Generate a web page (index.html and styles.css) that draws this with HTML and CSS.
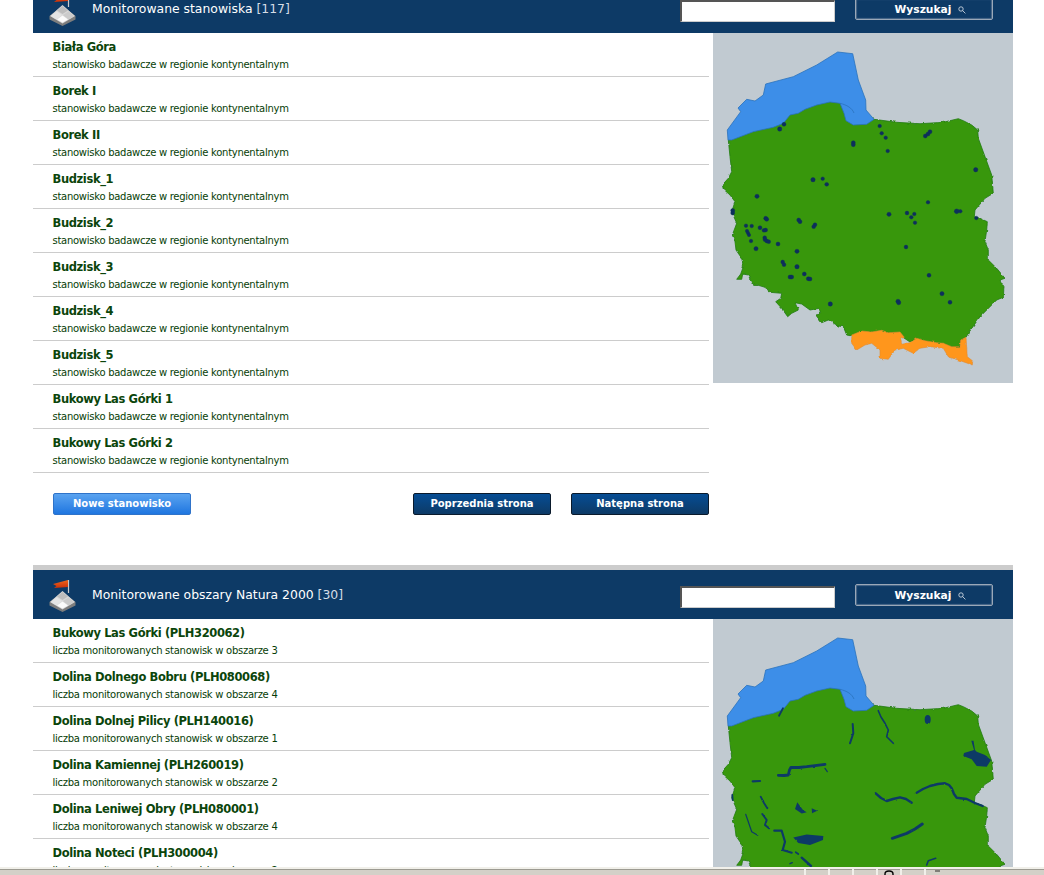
FILE: index.html
```html
<!DOCTYPE html>
<html lang="pl">
<head>
<meta charset="utf-8">
<title>Monitorowane stanowiska</title>
<link rel="stylesheet" href="styles.css">
</head>
<body>
<svg class="defs" width="0" height="0" aria-hidden="true">
  <defs>
    <filter id="rough" x="-5%" y="-5%" width="110%" height="110%" color-interpolation-filters="sRGB">
      <feTurbulence type="fractalNoise" baseFrequency="0.22" numOctaves="2" seed="4"/>
      <feDisplacementMap in="SourceGraphic" scale="2.6" xChannelSelector="R" yChannelSelector="G"/>
    </filter>
    <filter id="rough-soft" x="-5%" y="-5%" width="110%" height="110%" color-interpolation-filters="sRGB">
      <feTurbulence type="fractalNoise" baseFrequency="0.3" numOctaves="2" seed="9"/>
      <feDisplacementMap in="SourceGraphic" scale="1.8" xChannelSelector="R" yChannelSelector="G"/>
    </filter>
    <linearGradient id="flag-fill" x1="0" y1="0" x2="0" y2="1">
      <stop offset="0" stop-color="#f0661c"/>
      <stop offset="1" stop-color="#c9300a"/>
    </linearGradient>
    <symbol id="poland" viewBox="0 0 300 350">
      <rect width="300" height="350" fill="#c1cad1"/>
      <path class="land" d="M15.3 107L17 123.7 18.7 138.7 15.3 145.3 9.3 152 10.3 156 17 162 22 168.7 18.7 178.7 23.7 190.3 19.3 202 22 208.7 23 217 28.7 225.3 30.3 233.7 27.7 241 23.7 246.3 28.7 246.3 29.7 241 35.3 242 38.7 250.3 52 254.3 57 259.3 68.7 260.3 67.7 265.3 62.7 268.7 68.7 275.3 74.7 283.7 78.7 280.3 85.3 277 82 269.7 88.7 271 97 277 106.3 275.3 107.7 281 102.7 282 108.7 289.7 115.3 287 125.3 293 130.3 293.7 133.7 302 138.7 303 148.7 299 158.7 300 168.7 299 175.3 300 187 300 191 305 197 309 203.7 306 212 308 223.7 310 230.3 311 238.7 314 247 314 247.7 307 253 304.3 255.3 300.3 267 283.7 283.7 267 290.3 264.3 291 253.7 287 247 292 245.3 283.7 235.3 275.3 227 275.3 217 272 208.7 273.7 197 274.3 188.7 267 185.3 261.3 183.7 262 177 272 165.3 280.3 160.3 278.7 142 265.3 105.3 264.7 97 258.7 92 250.3 87.7 245.3 85.7 230.3 89.3 207 90.7 183.7 89.3 161 86.3 120 60 60 80Z"/>
      <path class="sea" d="M14.3 97L27.7 78.7 25 75 33.7 66.3 42 68 50.3 62 52.7 51 80.3 43.7 103.7 32 124.7 19 139.7 20.7 145.3 47 152.7 67 153 77 161 86.3 153.7 91.3 140.3 92 133 87.7 131 80.3 127 70.3 117 69 103.7 72 92 76.3 85.3 80.3 77 82 70.3 90.3 60.3 94.3 40.3 98.7 18.7 107 15 107Z"/>
      <path class="bay" d="M127 70.3C134 72 139 75 141 80"/>
      <path class="hills" d="M138.7 302L148.7 298 158.7 299 168.7 297.3 175.3 299.7 187 299 191.3 304.3 188 307 188.7 311.3 197 309.7 203.7 305.3 212 307.7 223.7 309.7 230.3 310.3 238.7 313.7 247 313.7 247.7 307 253 304.3 254.3 323.7 259.7 328 259.3 332 245.3 327 235.3 323.7 230.3 315.3 217 313.7 207 315.3 200.3 320.3 190.3 315.3 182 317 175.3 326.3 167 325.3 167 317 158.7 310.3 152 312 143.7 317 138.7 310.3Z"/>
    </symbol>
    <symbol id="flagstone" viewBox="0 0 27 32">
      <path d="M13.5 12L26.5 22V25.5L13.5 32 0.5 25.5V22Z" fill="#7d7d7d"/>
      <path d="M13.5 11L26 22 13.5 29.5 1 22Z" fill="#d8d8d8"/>
      <path d="M13.5 12L19 16.5 13.5 20 8 16.5Z" fill="#bdbdbd"/>
      <path d="M7.5 17.5L13 21 7.5 25.5 2 22Z" fill="#e4e4e4"/>
      <path d="M19.5 17.5L25 22 19.5 25.5 14 21Z" fill="#cbcbcb"/>
      <path d="M13.5 21.5L19 25.5 13.5 28.5 8 25.5Z" fill="#fbfbfb"/>
      <path d="M19.5 0V13" stroke="#c9c9c9" stroke-width="1.2"/>
      <path d="M19 0L4 4 7.5 6 5 8 19 7Z" fill="url(#flag-fill)"/>
    </symbol>
  </defs>
</svg>

<main class="page">
  <section class="panel">
    <header class="bar">
      <svg class="bar-icon"><use href="#flagstone"/></svg>
      <h2 class="bar-title">Monitorowane stanowiska <span class="count">[117]</span></h2>
      <input class="search-input" type="text" aria-label="Szukaj">
      <button class="search-button" type="button">Wyszukaj<svg class="lens" viewBox="0 0 8 8"><circle cx="3" cy="3" r="2.2"/><path d="M4.6 4.6L7.4 7.4"/></svg></button>
    </header>
    <div class="content">
      <div class="listing">
        <ul class="rows">
          <li class="row"><a class="row-title">Biała Góra</a><p class="row-note">stanowisko badawcze w regionie kontynentalnym</p></li>
          <li class="row"><a class="row-title">Borek I</a><p class="row-note">stanowisko badawcze w regionie kontynentalnym</p></li>
          <li class="row"><a class="row-title">Borek II</a><p class="row-note">stanowisko badawcze w regionie kontynentalnym</p></li>
          <li class="row"><a class="row-title">Budzisk_1</a><p class="row-note">stanowisko badawcze w regionie kontynentalnym</p></li>
          <li class="row"><a class="row-title">Budzisk_2</a><p class="row-note">stanowisko badawcze w regionie kontynentalnym</p></li>
          <li class="row"><a class="row-title">Budzisk_3</a><p class="row-note">stanowisko badawcze w regionie kontynentalnym</p></li>
          <li class="row"><a class="row-title">Budzisk_4</a><p class="row-note">stanowisko badawcze w regionie kontynentalnym</p></li>
          <li class="row"><a class="row-title">Budzisk_5</a><p class="row-note">stanowisko badawcze w regionie kontynentalnym</p></li>
          <li class="row"><a class="row-title">Bukowy Las Górki 1</a><p class="row-note">stanowisko badawcze w regionie kontynentalnym</p></li>
          <li class="row"><a class="row-title">Bukowy Las Górki 2</a><p class="row-note">stanowisko badawcze w regionie kontynentalnym</p></li>
        </ul>
        <div class="actions">
          <button class="btn btn-new" type="button">Nowe stanowisko</button>
          <div class="pager">
            <button class="btn btn-page" type="button">Poprzednia strona</button>
            <button class="btn btn-page" type="button">Natępna strona</button>
          </div>
        </div>
      </div>
      <svg class="map" viewBox="0 0 300 350">
        <use href="#poland"/>
        <g class="dots">
          <circle cx="71" cy="91.3" r="2"/><circle cx="66.7" cy="96" r="2.2"/><circle cx="140.3" cy="109.7" r="2"/><circle cx="140.3" cy="111.7" r="2"/>
          <circle cx="166.7" cy="93" r="1.8"/><circle cx="168.7" cy="100.3" r="1.8"/><circle cx="172.7" cy="104.7" r="1.8"/><circle cx="174.7" cy="118" r="1.8"/>
          <circle cx="217" cy="98.7" r="2"/><circle cx="215" cy="101" r="2"/><circle cx="212.3" cy="103" r="2"/><circle cx="262.7" cy="136.7" r="2.2"/>
          <circle cx="100" cy="146.7" r="2.2"/><circle cx="109.7" cy="145.7" r="1.8"/><circle cx="113.7" cy="151.3" r="1.9"/><circle cx="44" cy="163.3" r="2.1"/>
          <circle cx="215" cy="169.3" r="1.8"/><circle cx="19.7" cy="177.5" r="2"/><circle cx="19.7" cy="180" r="2"/><circle cx="52.7" cy="185.3" r="2"/>
          <circle cx="53.7" cy="186.3" r="2"/><circle cx="85.7" cy="187" r="2"/><circle cx="87" cy="188.7" r="2"/><circle cx="102" cy="191.7" r="1.9"/>
          <circle cx="100.7" cy="193.7" r="1.9"/><circle cx="33" cy="192.7" r="1.8"/><circle cx="38.7" cy="193" r="1.8"/><circle cx="47" cy="194.7" r="2"/>
          <circle cx="51" cy="197.3" r="1.9"/><circle cx="52.7" cy="197" r="1.9"/><circle cx="34" cy="198" r="1.7"/><circle cx="35" cy="200" r="1.7"/>
          <circle cx="36" cy="202" r="1.7"/><circle cx="51.7" cy="204.7" r="1.9"/><circle cx="52" cy="206.7" r="1.9"/><circle cx="53.7" cy="208" r="1.9"/>
          <circle cx="55.7" cy="208.7" r="1.9"/><circle cx="38" cy="208" r="1.8"/><circle cx="65" cy="211" r="2"/><circle cx="43" cy="215.7" r="2.1"/>
          <circle cx="84" cy="218.3" r="2.1"/><circle cx="69.7" cy="229" r="1.9"/><circle cx="71" cy="231.7" r="1.9"/><circle cx="84" cy="233.7" r="2.2"/>
          <circle cx="91.3" cy="241" r="2"/><circle cx="77" cy="244" r="2"/><circle cx="78.7" cy="244" r="2"/><circle cx="95.3" cy="245.7" r="2"/>
          <circle cx="97" cy="246" r="2"/><circle cx="117.3" cy="271" r="2.2"/><circle cx="176" cy="181.3" r="2.1"/><circle cx="194" cy="180" r="1.9"/>
          <circle cx="201.3" cy="181" r="1.8"/><circle cx="198.3" cy="184.3" r="1.8"/><circle cx="202" cy="189.7" r="1.8"/><circle cx="193" cy="214" r="1.9"/>
          <circle cx="216" cy="242.3" r="2"/><circle cx="229" cy="260.7" r="2.1"/><circle cx="237" cy="269.3" r="2"/><circle cx="185" cy="268.3" r="2.1"/>
          <circle cx="185.7" cy="269.7" r="2.1"/><circle cx="243.7" cy="178.3" r="2.4"/><circle cx="247.3" cy="178.3" r="1.8"/><circle cx="263.3" cy="185" r="1.8"/>
        </g>
      </svg>
    </div>
  </section>

  <section class="panel panel-second">
    <header class="bar">
      <svg class="bar-icon"><use href="#flagstone"/></svg>
      <h2 class="bar-title">Monitorowane obszary Natura 2000 <span class="count">[30]</span></h2>
      <input class="search-input" type="text" aria-label="Szukaj">
      <button class="search-button" type="button">Wyszukaj<svg class="lens" viewBox="0 0 8 8"><circle cx="3" cy="3" r="2.2"/><path d="M4.6 4.6L7.4 7.4"/></svg></button>
    </header>
    <div class="content">
      <div class="listing">
        <ul class="rows">
          <li class="row"><a class="row-title">Bukowy Las Górki (PLH320062)</a><p class="row-note">liczba monitorowanych stanowisk w obszarze 3</p></li>
          <li class="row"><a class="row-title">Dolina Dolnego Bobru (PLH080068)</a><p class="row-note">liczba monitorowanych stanowisk w obszarze 4</p></li>
          <li class="row"><a class="row-title">Dolina Dolnej Pilicy (PLH140016)</a><p class="row-note">liczba monitorowanych stanowisk w obszarze 1</p></li>
          <li class="row"><a class="row-title">Dolina Kamiennej (PLH260019)</a><p class="row-note">liczba monitorowanych stanowisk w obszarze 2</p></li>
          <li class="row"><a class="row-title">Dolina Leniwej Obry (PLH080001)</a><p class="row-note">liczba monitorowanych stanowisk w obszarze 4</p></li>
          <li class="row"><a class="row-title">Dolina Noteci (PLH300004)</a><p class="row-note">liczba monitorowanych stanowisk w obszarze 2</p></li>
        </ul>
      </div>
      <svg class="map" viewBox="0 0 300 350">
        <use href="#poland"/>
        <g class="rivers">
          <path d="M65.3 156.3L71 156.5 75.3 156 76.5 151 78 148.3 86 148.5 93.7 147.7 104 146.3 112 145.3" stroke-width="2.8"/>
          <path d="M112 149.3L114.3 152.7" stroke-width="1.2"/>
          <path d="M39.7 162.3L47 162" stroke-width="2.2"/>
          <path d="M165.3 91.7L168 98 172 104.3 175.3 111 173.7 117.7 180.3 124.3" stroke-width="1.6"/>
          <path d="M139.7 105L140.3 114.3 137 124.3" stroke-width="2"/>
          <path d="M162.7 174.3L168 179 173.7 182 180 180 187 178.3 193 180 198.7 183.7" stroke-width="2.4"/>
          <path d="M203.7 173.7L210 170 217 167 225 165 232 164.3 236 166 238.7 169.3 241 175 243.7 178.7 253.7 180 262 184 269.7 187" stroke-width="2.4"/>
          <path d="M179.3 219.3L193.7 214.3 202 210 209.3 205" stroke-width="3"/>
          <path d="M47.7 177.7L51 184 54.3 189.3" stroke-width="1.8"/>
          <path d="M49.3 195L53.7 201 52 206 56 209.3" stroke-width="2"/>
          <path d="M32.7 195.3L38.7 212.7 44.7 216.3" stroke-width="1.2"/>
          <path d="M61.3 211.7L68.7 211.7 72 222.7 69.7 231 78.7 233.7" stroke-width="2.2"/>
          <path d="M88.7 238.7L98 247" stroke-width="2.4"/>
          <path d="M82.7 233.3L85.3 235" stroke-width="1.8"/>
          <path d="M77 244.7L79.3 243.7" stroke-width="1.4"/>
          <path d="M213.7 246L215.3 241.7 222.7 239.3" stroke-width="1.6"/>
          <path d="M19.3 176L19.7 181" stroke-width="1.8"/>
          <path d="M70 89.3L66 96.7" stroke-width="1.8"/>
        </g>
        <g class="lakes">
          <ellipse cx="214.7" cy="100.5" rx="3" ry="4.5"/>
          <path d="M258.3 121.7L260.5 121.7 262 131 263.7 132.7 272 136 278 141 273.7 147.7 263.7 147 258.7 140.3 250.3 137 251 134 261 131Z"/>
          <path d="M84.3 183.3L87 187 90 191 93.7 193.3 88.7 194.5 82 190Z"/>
          <path d="M98.7 189.3L104.3 191.7 99 194.3Z"/>
          <path d="M80.3 218.5L93.7 215.5 110.3 217 110 221 97 226 85.3 224Z"/>
        </g>
      </svg>
    </div>
  </section>
</main>

<footer class="status">
  <span class="status-cell status-main"></span>
  <span class="status-cell"></span>
  <span class="status-cell"></span>
  <span class="status-cell"></span>
  <span class="status-cell"><svg class="status-globe" viewBox="0 0 12 6"><path d="M2 6V4Q2 1 6 1T10 4V6"/></svg></span>
  <span class="status-cell"></span>
  <span class="status-cell status-end"><i class="status-grip"></i></span>
</footer>
</body>
</html>
```
FILE: styles.css
```css
* { box-sizing: border-box; }
html, body { margin: 0; height: 100%; overflow: hidden; background: #fff; }
body { font-family: "DejaVu Sans", Verdana, sans-serif; }
.defs { position: absolute; }
.page { width: 980px; margin: -16px 0 0 33px; }
.panel { height: 581px; }
.panel-second { border-top: 5px solid #ccc; height: auto; }
.bar { height: 49px; background: #0d3a66; display: flex; align-items: center; padding: 0 20px 0 16px; }
.bar-icon { width: 27px; height: 32px; flex: none; margin: 3px 16px 0 0; }
.bar-title { margin: 0; flex: 1; font-size: 12.4px; font-weight: 400; color: #fff; }
.count { color: #d5dde5; }
.search-input { width: 155px; height: 22px; margin: 5px 20px 0 0; padding: 0; background: #fff; border-width: 2px 1px 1px 2px; border-style: solid; border-color: #555 #ccc #ccc #555; }
.search-button { width: 138px; height: 22px; margin-top: 1px; padding: 0 0 0 13px; background: #0d3a66; border: 1px solid #9aa8b8; border-radius: 2px; box-shadow: inset 0 0 1px 1px #4d6c8c; color: #fff; font: 700 10.7px "DejaVu Sans", sans-serif; }
.lens { width: 8px; height: 8px; margin-left: 7px; vertical-align: -1px; fill: none; stroke: #dfe6ee; stroke-width: 0.8; }
.content { display: flex; gap: 4px; align-items: flex-start; }
.listing { width: 676px; flex: none; }
.rows { list-style: none; margin: 0; padding: 0; }
.row { height: 44px; border-bottom: 1px solid #ccc; padding: 7px 0 0 19.5px; color: #063d06; }
.row-title { display: block; font-size: 11.5px; font-weight: 700; letter-spacing: -0.38px; line-height: 14px; color: #0b450b; }
.row-note { margin: 4px 0 0; font-size: 10px; letter-spacing: -0.27px; line-height: 13px; }
.actions { display: flex; justify-content: space-between; padding: 20px 0 0 20px; }
.pager { display: flex; gap: 20px; }
.btn { width: 138px; height: 22px; padding: 0 0 1px; border-radius: 2px; color: #fff; font: 700 10px "DejaVu Sans", sans-serif; }
.btn-new { background: linear-gradient(#5aa3f0, #1f76e0); border: 1px solid #2f73c9; }
.btn-page { background: linear-gradient(#064d94, #0d3a66); border: 1px solid #0a1a2c; }
.map { width: 300px; height: 350px; flex: none; display: block; }
.land { fill: #38970c; stroke: #1f7a10; stroke-width: 0.8; stroke-linejoin: round; filter: url(#rough); }
.sea { fill: #3d8ee8; stroke: #2a72bd; stroke-width: 0.8; stroke-linejoin: round; }
.bay { fill: none; stroke: #2a72bd; stroke-width: 0.8; }
.hills { fill: #ff961c; stroke: #e08a30; stroke-width: 0.6; filter: url(#rough); }
.dots circle { fill: #0d2f5c; stroke: #0d2f5c; stroke-width: 0.4; }
.rivers { filter: url(#rough-soft); }
.rivers path { fill: none; stroke: #0d3a66; stroke-linejoin: round; stroke-linecap: round; }
.lakes { filter: url(#rough-soft); }
.lakes path, .lakes ellipse { fill: #0d3a66; }
.status { position: fixed; left: 0; right: 0; bottom: 0; height: 8px; background: #f1f0ea; display: flex; gap: 2px; padding-top: 2px; }
.status-cell { flex: 0 0 22px; background: #d4d0c8; border-top: 1px solid #9d9b92; overflow: hidden; display: flex; justify-content: center; }
.status-main { flex: 0 0 804px; }
.status-end { flex: 1 1 auto; justify-content: flex-start; padding-left: 9px; }
.status-globe { width: 12px; height: 6px; fill: none; stroke: #000; stroke-width: 1.4; }
.status-grip { width: 5px; height: 2px; background: #807e78; }
```
